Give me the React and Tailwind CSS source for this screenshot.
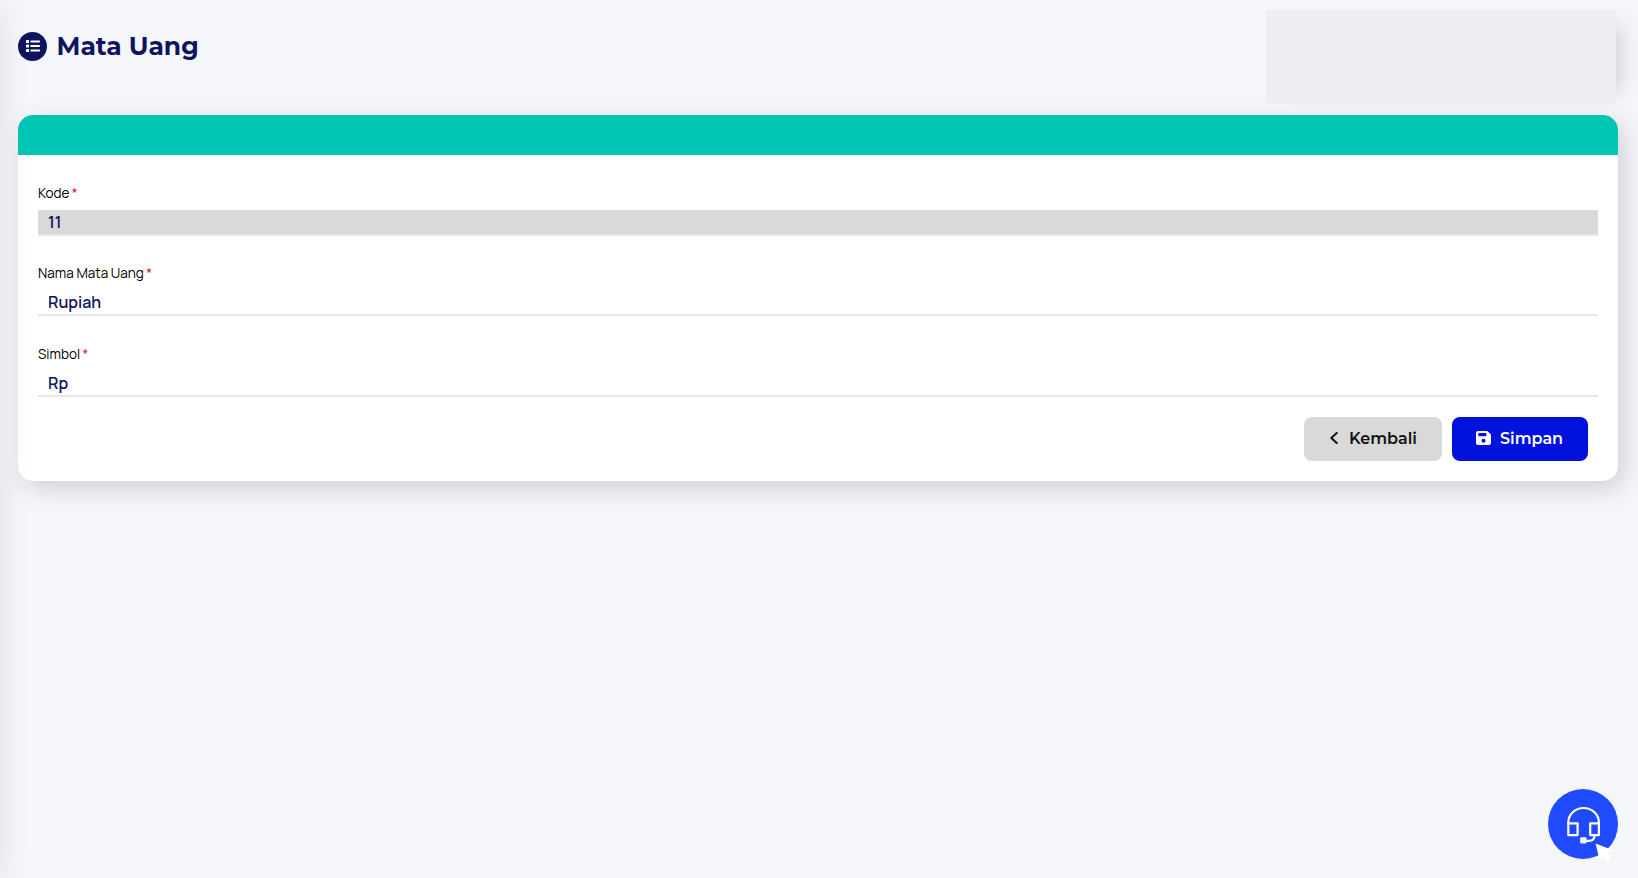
import React from "react";

function ListIcon() {
  return (
    <span className="flex h-[29px] w-[29px] items-center justify-center rounded-full bg-[#0e145f]">
      <svg className="-mt-px" width="14" height="12" viewBox="0 0 14 12" fill="#fff">
        <rect x="0" y="0" width="3" height="3" rx=".5" />
        <rect x="0" y="4.5" width="3" height="3" rx=".5" />
        <rect x="0" y="9" width="3" height="3" rx=".5" />
        <rect x="4.3" y="0.5" width="9.7" height="2" rx=".7" />
        <rect x="4.3" y="5" width="9.7" height="2" rx=".7" />
        <rect x="4.3" y="9.5" width="9.7" height="2" rx=".7" />
      </svg>
    </span>
  );
}

function Field({ label, value, disabled }) {
  return (
    <div>
      <div className="flex h-5 items-center gap-[2.5px] font-['Manrope','Inter',sans-serif] text-[13.5px] text-black">
        <span>{label}</span>
        <span className="text-[#cc1717]">*</span>
      </div>
      <div
        className={`mt-[7px] flex h-[26px] items-center border-b-2 border-[#e5e5ea] pl-[10px] font-['Manrope','Inter',sans-serif] text-[16px] font-semibold text-[#0e145f] ${disabled ? "bg-[#d9d9d9]" : ""}`}
      >
        {value}
      </div>
    </div>
  );
}

function SupportButton() {
  return (
    <button className="absolute right-5 bottom-[17px] h-[72px] w-[70px]" aria-label="Support">
      <svg className="block overflow-visible" width="70" height="72" viewBox="0 0 70 72" fill="none">
        <circle cx="35" cy="35" r="35" fill="#214aff" />
        <g stroke="#fff" strokeWidth="2.2" strokeLinejoin="round">
          <path d="M20.3 34.5V33.5a15.3 14.5 0 0 1 30.6 0v1" />
          <rect x="20.3" y="34.3" width="9.3" height="11.8" />
          <rect x="42.2" y="34.3" width="8.7" height="11.8" />
          <path d="M46.5 46.5c0 3.5-2 5.3-5.5 5.3H38" />
        </g>
        <rect x="32.2" y="48.3" width="6.3" height="6.3" rx="1" fill="#fff" />
        <path
          d="M48.6 55.6 63 61.3 58.8 64.2 61.8 69.4 59 71.3 55.6 66.5 52 69.5Z"
          fill="#fff"
          stroke="#fff"
          strokeWidth="1.5"
          strokeLinejoin="round"
        />
      </svg>
    </button>
  );
}

export default function App() {
  return (
    <div className="relative h-[878px] w-full overflow-hidden bg-[#f4f6fa]">
      <header className="flex h-[115px] justify-between pt-[10px] pr-[22px] pl-[18px]">
        <div className="flex h-[73px] items-center gap-[9.5px]">
          <ListIcon />
          <h1 className="font-['Montserrat','Inter',sans-serif] text-[25px] leading-none font-bold text-[#0e145f]">
            Mata Uang
          </h1>
        </div>
        <div className="h-[94px] w-[350px] bg-[#eeeff3] shadow-[18px_2px_20px_-14px_rgba(0,0,0,0.16)]" />
      </header>

      <main className="mr-5 ml-[18px] h-[366px] rounded-[15px] bg-white shadow-[6px_8px_24px_rgba(0,0,0,0.15)]">
        <div className="h-10 rounded-t-[15px] bg-[#00c6b3]" />
        <form className="px-5 pt-7">
          <div className="flex flex-col gap-[27.4px]">
            <Field label="Kode" value="11" disabled />
            <Field label="Nama Mata Uang" value="Rupiah" />
            <Field label="Simbol" value="Rp" />
          </div>
          <div className="mt-5 flex justify-end gap-[10px] pr-[10px] font-['Montserrat','Inter',sans-serif] text-[16px] font-semibold">
            <button type="button" className="flex h-11 w-[138px] items-center rounded-lg bg-[#d9d9d9] pl-[26px] text-[#111]">
              <svg className="-mt-0.5" width="8" height="12" viewBox="0 0 8 12" fill="none" stroke="currentColor" strokeWidth="2" strokeLinecap="round" strokeLinejoin="round">
                <path d="M6.7 1 1.3 6l5.4 5" />
              </svg>
              <span className="ml-[11px]">Kembali</span>
            </button>
            <button type="button" className="flex h-11 w-[136px] items-center rounded-lg bg-[#0012dc] pl-6 text-white">
              <svg className="-mt-0.5" width="15" height="14" viewBox="0 0 15 14" fill="currentColor" fillRule="evenodd">
                <path d="M2 0h9.2L15 3.6V12a2 2 0 0 1-2 2H2a2 2 0 0 1-2-2V2a2 2 0 0 1 2-2Zm.3 2v3.2h8V2Zm5.2 5.8a2 2 0 1 0 0 4 2 2 0 0 0 0-4Z" />
              </svg>
              <span className="ml-[9px]">Simpan</span>
            </button>
          </div>
        </form>
      </main>

      <div className="pointer-events-none absolute top-[10px] bottom-0 -left-5 w-5 shadow-[0_0_30px_rgba(0,0,0,0.11)]" />
      <SupportButton />
    </div>
  );
}
